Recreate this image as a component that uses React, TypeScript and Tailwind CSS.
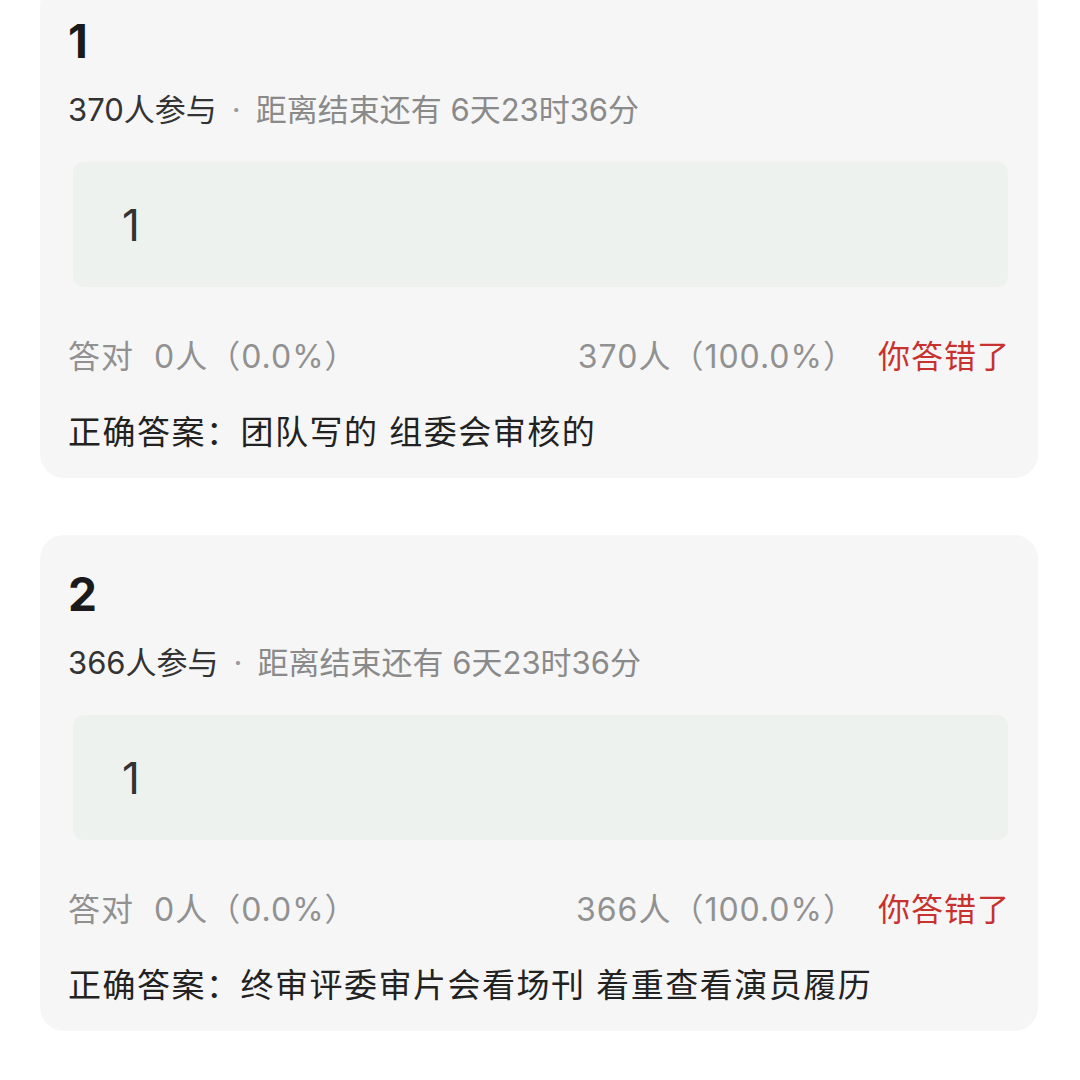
const font = "font-['Inter','Noto_Sans_CJK_SC',sans-serif]"

type Quiz = {
  no: string
  joined: number
  left: string
  answer: string
  correct: string
}

const quizzes: Quiz[] = [
  { no: "1", joined: 370, left: "6天23时36分", answer: "1", correct: "团队写的 组委会审核的" },
  { no: "2", joined: 366, left: "6天23时36分", answer: "1", correct: "终审评委审片会看场刊 着重查看演员履历" },
]

const QuizCard = ({ q }: { q: Quiz }) => {
  return (
    <div className="w-[998px] rounded-[24px] bg-[#f6f6f6] px-[28px] pt-[35px] pb-[26px]">
      <div className="text-[46px] font-bold leading-[48px] text-[#1a1a1a]">{q.no}</div>
      <div className="mt-[25px] flex items-center text-[31px] leading-[40px] text-[#8a8a8a]">
        <span className="text-[#333]">{q.joined}人参与</span>
        <span className="mx-[15px] text-[#9a9a9a]">·</span>
        <span>距离结束还有 {q.left}</span>
      </div>
      <div className="mt-[32px] ml-[5px] mr-[2px] flex h-[125px] items-center rounded-[10px] bg-[#eef2ef] pl-[49px]">
        <span className="text-[44px] leading-none text-[#333]">{q.answer}</span>
      </div>
      <div className="mt-[50px] flex items-center justify-between text-[32px] leading-[40px] tracking-[1px] text-[#919191]">
        <span>答对&nbsp;&nbsp;0人（0.0%）</span>
        <div className="flex items-center gap-[22px]">
          <span>{q.joined}人（100.0%）</span>
          <span className="text-[#c8322e]">你答错了</span>
        </div>
      </div>
      <div className="mt-[35px] text-[33px] leading-[40px] tracking-[1.5px] text-[#222]">正确答案：{q.correct}</div>
    </div>
  )
}

export default function App() {
  return (
    <div className={`${font} h-[1080px] w-[1080px] overflow-hidden bg-white`}>
      <div className="ml-[40px] mt-[-18px] flex flex-col gap-[57px]">
        {quizzes.map((q) => (
          <QuizCard key={q.no} q={q} />
        ))}
      </div>
    </div>
  )
}
